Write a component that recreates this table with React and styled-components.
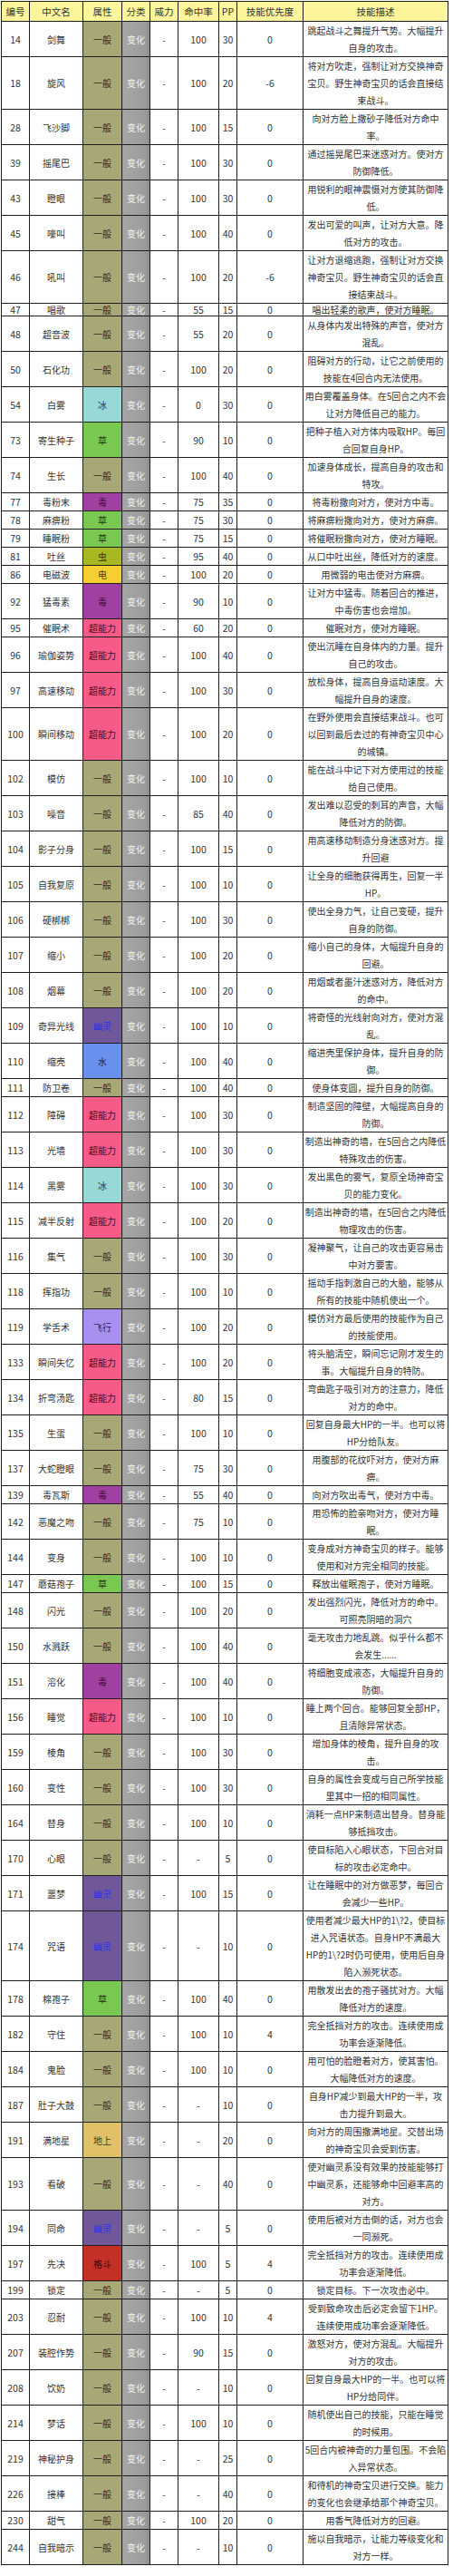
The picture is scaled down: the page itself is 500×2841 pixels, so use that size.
import React from "react";
import styled, { createGlobalStyle } from "styled-components";

const GlobalStyle = createGlobalStyle`
  body {
    margin: 0;
    background: #fff;
    font-family: "Noto Sans CJK SC", "Noto Sans", sans-serif;
  }
`;

// type colours (fill / text)
const TYPES = {
  一般: ["#a8a778", "#2e2e1e"],
  冰: ["#98d8d6", "#2a3e3e"],
  草: ["#7ac852", "#1e3a12"],
  毒: ["#a040a0", "#3c0c3c"],
  虫: ["#a8b822", "#2e3208"],
  电: ["#f6d032", "#4a3a06"],
  超能力: ["#f65a88", "#4a0c1e"],
  幽灵: ["#705898", "#2a2cff"],
  水: ["#6a90ee", "#15265a"],
  飞行: ["#a890f0", "#2a1e5a"],
  地上: ["#e0c068", "#4a3a10"],
  格斗: ["#c23028", "#3a0806"],
};

const COLS = [31, 59, 43, 31, 31, 45, 20, 73, 160];
const HEAD = ["编号", "中文名", "属性", "分类", "威力", "命中率", "PP", "技能优先度", "技能描述"];

// id, name, type, accuracy, pp, priority, description
const MOVES = [
  ["14", "剑舞", "一般", "100", "30", "0", "跳起战斗之舞提升气势。大幅提升\n自身的攻击。"],
  ["18", "旋风", "一般", "100", "20", "-6", "将对方吹走，强制让对方交换神奇\n宝贝。野生神奇宝贝的话会直接结\n束战斗。"],
  ["28", "飞沙脚", "一般", "100", "15", "0", "向对方脸上撒砂子降低对方命中\n率。"],
  ["39", "摇尾巴", "一般", "100", "30", "0", "通过摇晃尾巴来迷惑对方。使对方\n防御降低。"],
  ["43", "瞪眼", "一般", "100", "30", "0", "用锐利的眼神震慑对方使其防御降\n低。"],
  ["45", "嚎叫", "一般", "100", "40", "0", "发出可爱的叫声，让对方大意。降\n低对方的攻击。"],
  ["46", "吼叫", "一般", "100", "20", "-6", "让对方退缩逃跑，强制让对方交换\n神奇宝贝。野生神奇宝贝的话会直\n接结束战斗。"],
  ["47", "唱歌", "一般", "55", "15", "0", "唱出轻柔的歌声，使对方睡眠。", true],
  ["48", "超音波", "一般", "55", "20", "0", "从身体内发出特殊的声音，使对方\n混乱。"],
  ["50", "石化功", "一般", "100", "20", "0", "阻碍对方的行动，让它之前使用的\n技能在4回合内无法使用。"],
  ["54", "白雾", "冰", "0", "30", "0", "用白雾覆盖身体。在5回合之内不会\n让对方降低自己的能力。"],
  ["73", "寄生种子", "草", "90", "10", "0", "把种子植入对方体内吸取HP。每回\n合回复自身HP。"],
  ["74", "生长", "一般", "100", "40", "0", "加速身体成长，提高自身的攻击和\n特攻。"],
  ["77", "毒粉末", "毒", "75", "35", "0", "将毒粉撒向对方，使对方中毒。"],
  ["78", "麻痹粉", "草", "75", "30", "0", "将麻痹粉撒向对方，使对方麻痹。"],
  ["79", "睡眠粉", "草", "75", "15", "0", "将催眠粉撒向对方，使对方睡眠。"],
  ["81", "吐丝", "虫", "95", "40", "0", "从口中吐出丝，降低对方的速度。"],
  ["86", "电磁波", "电", "100", "20", "0", "用微弱的电击使对方麻痹。"],
  ["92", "猛毒素", "毒", "90", "10", "0", "让对方中猛毒。随着回合的推进，\n中毒伤害也会增加。"],
  ["95", "催眠术", "超能力", "60", "20", "0", "催眠对方，使对方睡眠。"],
  ["96", "瑜伽姿势", "超能力", "100", "40", "0", "使出沉睡在自身体内的力量。提升\n自己的攻击。"],
  ["97", "高速移动", "超能力", "100", "30", "0", "放松身体，提高自身运动速度。大\n幅提升自身的速度。"],
  ["100", "瞬间移动", "超能力", "100", "20", "0", "在野外使用会直接结束战斗。也可\n以回到最后去过的有神奇宝贝中心\n的城镇。"],
  ["102", "模仿", "一般", "100", "10", "0", "能在战斗中记下对方使用过的技能\n给自己使用。"],
  ["103", "噪音", "一般", "85", "40", "0", "发出难以忍受的刺耳的声音，大幅\n降低对方的防御。"],
  ["104", "影子分身", "一般", "100", "15", "0", "用高速移动制造分身迷惑对方。提\n升回避"],
  ["105", "自我复原", "一般", "100", "10", "0", "让全身的细胞获得再生，回复一半\nHP。"],
  ["106", "硬梆梆", "一般", "100", "30", "0", "使出全身力气，让自己变硬，提升\n自身的防御。"],
  ["107", "缩小", "一般", "100", "20", "0", "缩小自己的身体，大幅提升自身的\n回避。"],
  ["108", "烟幕", "一般", "100", "20", "0", "用烟或者墨汁迷惑对方，降低对方\n的命中。"],
  ["109", "奇异光线", "幽灵", "100", "10", "0", "将奇怪的光线射向对方，使对方混\n乱。"],
  ["110", "缩壳", "水", "100", "40", "0", "缩进壳里保护身体，提升自身的防\n御。"],
  ["111", "防卫卷", "一般", "100", "40", "0", "使身体变圆，提升自身的防御。"],
  ["112", "障碍", "超能力", "100", "30", "0", "制造坚固的障壁，大幅提高自身的\n防御。"],
  ["113", "光墙", "超能力", "100", "30", "0", "制造出神奇的墙，在5回合之内降低\n特殊攻击的伤害。"],
  ["114", "黑雾", "冰", "100", "30", "0", "发出黑色的雾气，复原全场神奇宝\n贝的能力变化。"],
  ["115", "减半反射", "超能力", "100", "20", "0", "制造出神奇的墙，在5回合之内降低\n物理攻击的伤害。"],
  ["116", "集气", "一般", "100", "30", "0", "凝神聚气，让自己的攻击更容易击\n中对方要害。"],
  ["118", "挥指功", "一般", "100", "10", "0", "摇动手指刺激自己的大脑，能够从\n所有的技能中随机使出一个。"],
  ["119", "学舌术", "飞行", "100", "20", "0", "模仿对方最后使用的技能作为自己\n的技能使用。"],
  ["133", "瞬间失忆", "超能力", "100", "20", "0", "将头脑清空，瞬间忘记刚才发生的\n事。大幅提升自身的特防。"],
  ["134", "折弯汤匙", "超能力", "80", "15", "0", "弯曲匙子吸引对方的注意力，降低\n对方的命中。"],
  ["135", "生蛋", "一般", "100", "10", "0", "回复自身最大HP的一半。也可以将\nHP分给队友。"],
  ["137", "大蛇瞪眼", "一般", "75", "30", "0", "用腹部的花纹吓对方，使对方麻\n痹。"],
  ["139", "毒瓦斯", "毒", "55", "40", "0", "向对方吹出毒气，使对方中毒。"],
  ["142", "恶魔之吻", "一般", "75", "10", "0", "用恐怖的脸亲吻对方，使对方睡\n眠。"],
  ["144", "变身", "一般", "100", "10", "0", "变身成对方神奇宝贝的样子。能够\n使用和对方完全相同的技能。"],
  ["147", "蘑菇孢子", "草", "100", "15", "0", "释放出催眠孢子，使对方睡眠。"],
  ["148", "闪光", "一般", "100", "20", "0", "发出强烈闪光，降低对方的命中。\n可照亮阴暗的洞穴"],
  ["150", "水溅跃", "一般", "100", "40", "0", "毫无攻击力地乱跳。似乎什么都不\n会发生......"],
  ["151", "溶化", "毒", "100", "40", "0", "将细胞变成液态，大幅提升自身的\n防御。"],
  ["156", "睡觉", "超能力", "100", "10", "0", "睡上两个回合。能够回复全部HP，\n且清除异常状态。"],
  ["159", "棱角", "一般", "100", "30", "0", "增加身体的棱角，提升自身的攻\n击。"],
  ["160", "变性", "一般", "100", "30", "0", "自身的属性会变成与自己所学技能\n里其中一招的相同属性。"],
  ["164", "替身", "一般", "100", "10", "0", "消耗一点HP来制造出替身。替身能\n够抵挡攻击。"],
  ["170", "心眼", "一般", "-", "5", "0", "使目标陷入心眼状态，下回合对目\n标的攻击必定命中。"],
  ["171", "噩梦", "幽灵", "100", "15", "0", "让在睡眠中的对方做恶梦，每回合\n会减少一些HP。"],
  ["174", "咒语", "幽灵", "-", "10", "0", "使用者减少最大HP的1\\?2，使目标\n进入咒语状态。自身HP不满最大\nHP的1\\?2时仍可使用，使用后自身\n陷入濒死状态。"],
  ["178", "棉孢子", "草", "100", "40", "0", "用散发出去的孢子骚扰对方。大幅\n降低对方的速度。"],
  ["182", "守住", "一般", "100", "10", "4", "完全抵挡对方的攻击。连续使用成\n功率会逐渐降低。"],
  ["184", "鬼脸", "一般", "100", "10", "0", "用可怕的脸瞪着对方，使其害怕。\n大幅降低对方的速度。"],
  ["187", "肚子大鼓", "一般", "-", "10", "0", "自身HP减少到最大HP的一半，攻\n击力提升到最大。"],
  ["191", "满地星", "地上", "-", "20", "0", "向对方的周围撒满地星。交替出场\n的神奇宝贝会受到伤害。"],
  ["193", "看破", "一般", "-", "40", "0", "使对幽灵系没有效果的技能能够打\n中幽灵系，还能够命中回避率高的\n对方。"],
  ["194", "同命", "幽灵", "-", "5", "0", "使用后被对方击倒的话，对方也会\n一同濒死。"],
  ["197", "先决", "格斗", "100", "5", "4", "完全抵挡对方的攻击。连续使用成\n功率会逐渐降低。"],
  ["199", "锁定", "一般", "-", "5", "0", "锁定目标。下一次攻击必中。"],
  ["203", "忍耐", "一般", "100", "10", "4", "受到致命攻击后必定会留下1HP。\n连续使用成功率会逐渐降低。"],
  ["207", "装腔作势", "一般", "90", "15", "0", "激怒对方，使对方混乱。大幅提升\n对方的攻击。"],
  ["208", "饮奶", "一般", "-", "10", "0", "回复自身最大HP的一半。也可以将\nHP分给同伴。"],
  ["214", "梦话", "一般", "100", "10", "0", "随机使出自己的技能，只能在睡觉\n的时候用。"],
  ["219", "神秘护身", "一般", "-", "25", "0", "5回合内被神奇的力量包围。不会陷\n入异常状态。"],
  ["226", "接棒", "一般", "-", "40", "0", "和待机的神奇宝贝进行交换。能力\n的变化也会继承给那个神奇宝贝。"],
  ["230", "甜气", "一般", "100", "20", "0", "用香气降低对方的回避。"],
  ["244", "自我暗示", "一般", "-", "10", "0", "施以自我暗示，让能力等级变化和\n对方一样。"],
];

const Page = styled.div`
  padding: 1px 6px 4px 1px;
`;

const Table = styled.table`
  border-collapse: collapse;
  table-layout: fixed;
  width: 493px;
  border: 1px solid #1e1e1e;
`;

const Col = styled.col`
  width: ${(p) => p.$w}px;
`;

const HeadCell = styled.th`
  background: #fdf59c;
  border: 1px solid #1e1e1e;
  height: 21px;
  padding: 0;
  font-size: 10.5px;
  font-weight: normal;
  color: #333;
  white-space: nowrap;
`;

const Row = styled.tr`
  & > td {
    line-height: ${(p) => (p.$tight ? "13px" : "19px")};
  }
`;

const Cell = styled.td`
  border: 1px solid #1e1e1e;
  padding: 0;
  text-align: center;
  vertical-align: middle;
  font-size: ${(p) => (p.$num ? "10.5px" : "10px")};
  color: #333;
  background: #fff;
  white-space: nowrap;
  overflow: hidden;
`;

const TypeCell = styled(Cell)`
  background: ${(p) => p.$bg};
  color: ${(p) => p.$fg};
`;

const KindCell = styled(Cell)`
  background: linear-gradient(90deg, #a6a6a6 0%, #9c9c9c 80%, #8e8e8e 100%);
  color: #f2f2f2;
`;

const DescCell = styled(Cell)`
  white-space: pre;
  padding: 0 1px;
  overflow: visible;
`;

export default function App() {
  return (
    <Page>
      <GlobalStyle />
      <Table>
        <colgroup>
          {COLS.map((w, i) => (
            <Col key={i} $w={w} />
          ))}
        </colgroup>
        <thead>
          <tr>
            {HEAD.map((h) => (
              <HeadCell key={h}>{h}</HeadCell>
            ))}
          </tr>
        </thead>
        <tbody>
          {MOVES.map(([id, name, type, acc, pp, prio, desc, tight]) => {
            const [bg, fg] = TYPES[type];
            return (
              <Row key={id} $tight={tight}>
                <Cell $num>{id}</Cell>
                <Cell>{name}</Cell>
                <TypeCell $bg={bg} $fg={fg}>{type}</TypeCell>
                <KindCell>变化</KindCell>
                <Cell>-</Cell>
                <Cell $num>{acc}</Cell>
                <Cell $num>{pp}</Cell>
                <Cell $num>{prio}</Cell>
                <DescCell>{desc}</DescCell>
              </Row>
            );
          })}
        </tbody>
      </Table>
    </Page>
  );
}
